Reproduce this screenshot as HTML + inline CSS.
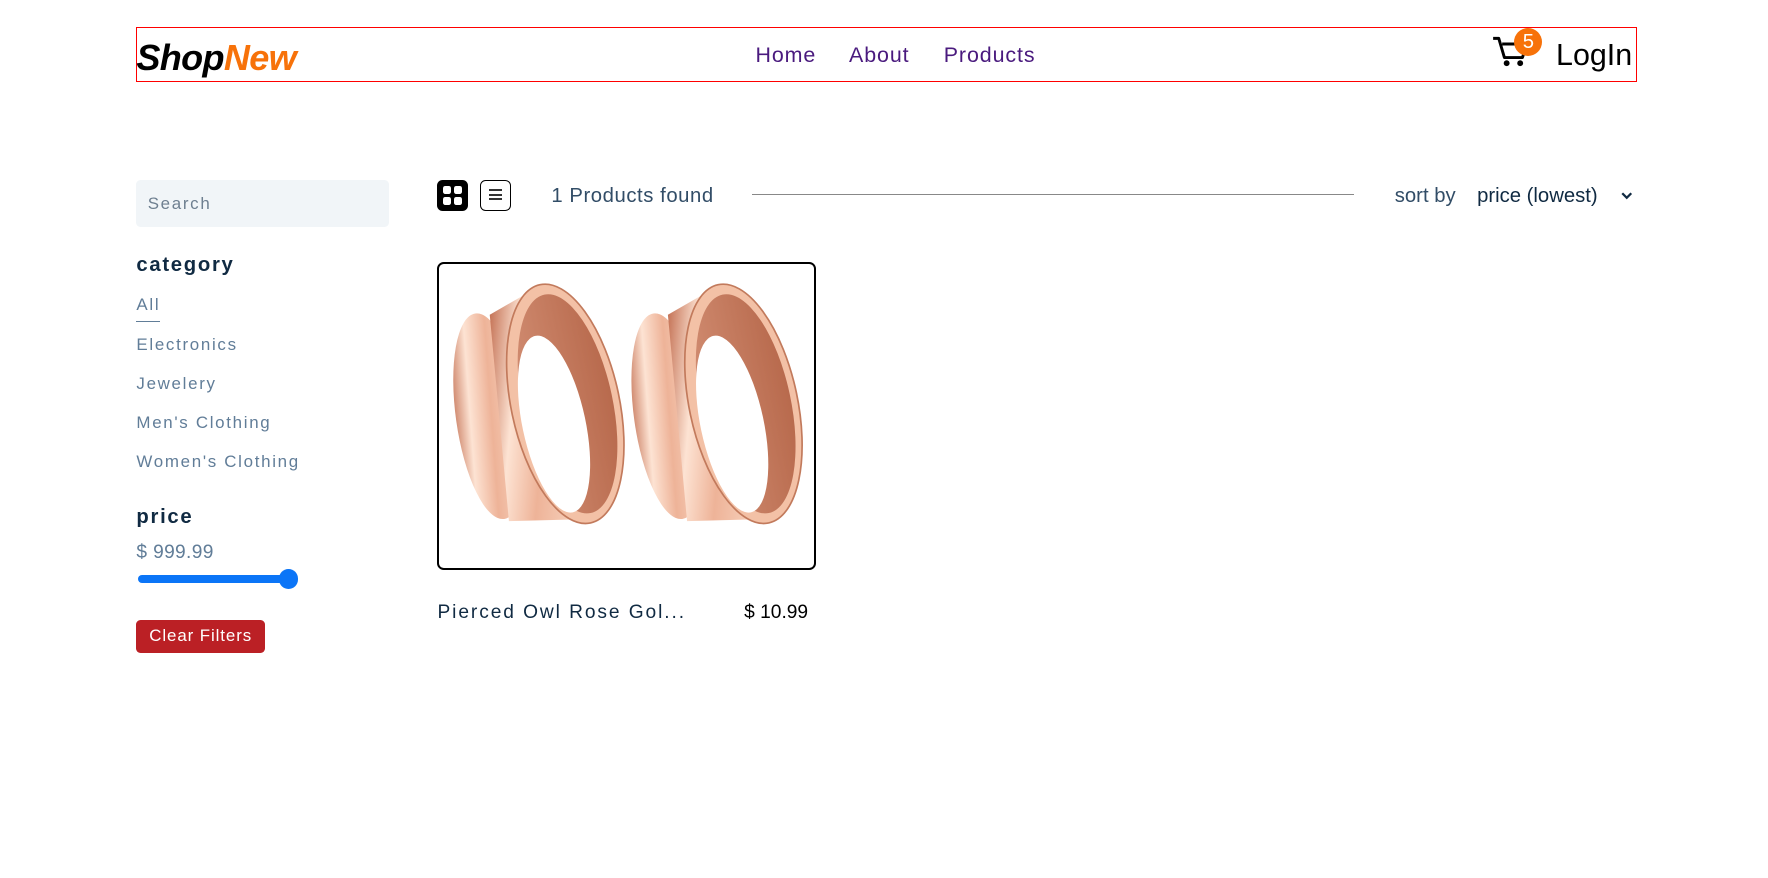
<!DOCTYPE html>
<html><head><meta charset="utf-8">
<style>
html,body{margin:0;padding:0;background:#fff;}
body{width:1768px;height:878px;overflow:hidden;}
#w{zoom:1.12755;width:1568px;height:779px;position:relative;font-family:"Liberation Sans",sans-serif;}
.a{position:absolute;white-space:nowrap;}
.hdr{left:121px;top:24px;width:1329px;height:47px;border:1px solid #f00;}
.logo{left:121px;top:29px;font-size:32px;font-style:italic;font-weight:bold;letter-spacing:-0.6px;line-height:44px;}
.nav{top:36px;font-size:19px;color:#4a1a7e;line-height:26px;letter-spacing:0.8px;}
.side{color:#617d98;font-size:15px;letter-spacing:1.5px;line-height:20px;}
.h{color:#102a42;font-weight:bold;font-size:18px;letter-spacing:1.5px;}
</style></head><body><div id="w">
<div class="a hdr"></div>
<div class="a logo"><span style="color:#000">Shop</span><span style="color:#f7720a">New</span></div>
<div class="a nav" style="left:670px">Home</div>
<div class="a nav" style="left:753px">About</div>
<div class="a nav" style="left:837px">Products</div>
<svg class="a" style="left:1323px;top:31px" width="34" height="30" viewBox="0 0 34 30">
<path d="M1 3h5l5 17h16l4-12H9" fill="none" stroke="#000" stroke-width="2.6" stroke-linejoin="round"/>
<circle cx="13" cy="25" r="2.6" fill="#000"/><circle cx="25" cy="25" r="2.6" fill="#000"/>
</svg>
<div class="a" style="left:1343px;top:25px;width:25px;height:25px;border-radius:50%;background:#f7720a;color:#fff;font-size:18px;line-height:25px;text-align:center">5</div>
<div class="a" style="left:1380px;top:32px;font-size:27px;line-height:34px;color:#000">LogIn</div>

<div class="a" style="left:121px;top:160px;width:224px;height:41px;background:#f1f5f8;border-radius:4px"></div>
<div class="a side" style="left:131px;top:171px;color:#6e7f90">Search</div>
<div class="a h" style="left:121px;top:225px">category</div>
<div class="a side" style="left:121px;top:261px">All</div>
<div class="a" style="left:121px;top:285px;width:21px;height:1px;background:#617d98"></div>
<div class="a side" style="left:121px;top:296px">Electronics</div>
<div class="a side" style="left:121px;top:331px">Jewelery</div>
<div class="a side" style="left:121px;top:365px">Men's Clothing</div>
<div class="a side" style="left:121px;top:400px">Women's Clothing</div>
<div class="a h" style="left:121px;top:449px">price</div>
<div class="a side" style="left:121px;top:481px;font-size:17px;letter-spacing:0.3px">$ 999.99</div>
<div class="a" style="left:122px;top:510px;width:136px;height:7px;border-radius:4px;background:#0b75f7"></div>
<div class="a" style="left:247px;top:505px;width:17px;height:17px;border-radius:50%;background:#0b75f7"></div>
<div class="a" style="left:121px;top:550px;width:114px;height:29px;background:#bb2025;border-radius:4px;color:#fff;font-size:15px;letter-spacing:.8px;line-height:29px;text-align:center">Clear Filters</div>

<div class="a" style="left:388px;top:160px;width:27px;height:27px;background:#000;border-radius:5px"></div>
<div class="a" style="left:393px;top:165px;width:7px;height:7px;background:#fff;border-radius:2px"></div>
<div class="a" style="left:403px;top:165px;width:7px;height:7px;background:#fff;border-radius:2px"></div>
<div class="a" style="left:393px;top:175px;width:7px;height:7px;background:#fff;border-radius:2px"></div>
<div class="a" style="left:403px;top:175px;width:7px;height:7px;background:#fff;border-radius:2px"></div>
<div class="a" style="left:426px;top:160px;width:25px;height:25px;border:1px solid #000;border-radius:5px"></div>
<div class="a" style="left:434px;top:168px;width:11px;height:1.5px;background:#333"></div>
<div class="a" style="left:434px;top:172px;width:11px;height:1.5px;background:#333"></div>
<div class="a" style="left:434px;top:176px;width:11px;height:1.5px;background:#333"></div>
<div class="a" style="left:489px;top:162px;font-size:18px;color:#324d67;line-height:24px;letter-spacing:0.5px">1 Products found</div>
<div class="a" style="left:667px;top:172px;width:534px;height:1px;background:#888"></div>
<div class="a" style="left:1237px;top:162px;font-size:18px;color:#324d67;line-height:24px">sort by</div>
<div class="a" style="left:1310px;top:162px;font-size:18px;color:#102a42;line-height:24px">price (lowest)</div>
<svg class="a" style="left:1437px;top:169px" width="12" height="9" viewBox="0 0 12 9"><path d="M2 2l4 4 4-4" fill="none" stroke="#102a42" stroke-width="2"/></svg>

<div class="a" style="left:388px;top:232px;width:332px;height:270px;border:2px solid #000;border-radius:6px;overflow:hidden;background:#fff">
<svg width="332" height="270" viewBox="0 0 332 270">
<defs>
<linearGradient id="g" x1="0" x2="1" y1="0" y2="0.2">
<stop offset="0" stop-color="#c06a4c"/><stop offset="0.3" stop-color="#fde3d3"/><stop offset="0.6" stop-color="#eeb398"/><stop offset="0.9" stop-color="#f5cbb5"/><stop offset="1" stop-color="#b05a3c"/></linearGradient>
<linearGradient id="gi" x1="0" x2="1"><stop offset="0" stop-color="#d08b70"/><stop offset="1" stop-color="#b86a4d"/></linearGradient>
</defs>
<g id="r">
<ellipse cx="45" cy="135" rx="30" ry="92" fill="url(#g)" transform="rotate(-8 45 135)"/>
<polygon points="45,45 92,18 140,226 62,228" fill="url(#g)"/>
<ellipse cx="112" cy="124" rx="48" ry="108" fill="#f3c1a6" stroke="#c27a5c" stroke-width="1.5" transform="rotate(-12 112 124)"/>
<ellipse cx="114" cy="124" rx="40" ry="99" fill="url(#gi)" transform="rotate(-12 114 124)"/>
<ellipse cx="102" cy="142" rx="28" ry="80" fill="#fff" transform="rotate(-12 102 142)"/>
</g>
<use href="#r" x="158"/>
</svg>
</div>
<div class="a" style="left:388px;top:531px;font-size:17px;letter-spacing:1.7px;color:#102a42;line-height:24px">Pierced Owl Rose Gol...</div>
<div class="a" style="left:660px;top:531px;font-size:17px;color:#000;line-height:24px">$ 10.99</div>
</div></body></html>
